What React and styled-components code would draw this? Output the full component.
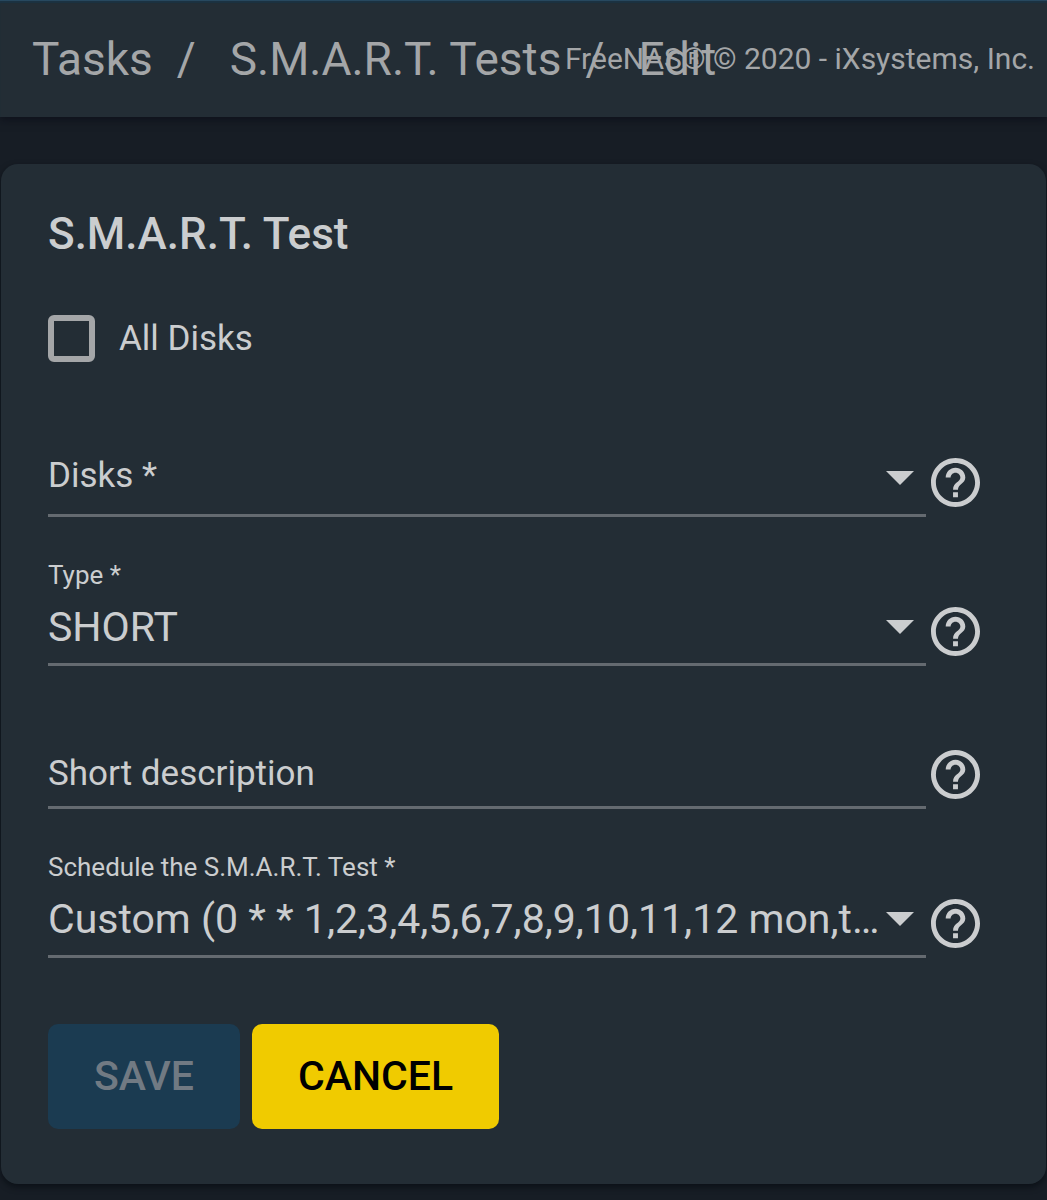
import React, { useState } from 'react'
import styled, { createGlobalStyle, css } from 'styled-components'
import { MdHelpOutline } from 'react-icons/md'


const colors = {
  page: '#171d25',
  panel: '#232d35',
  accentLine: '#27485f',
  text: '#cbcdcf',
  muted: '#a4a6a8',
  underline: '#646a70',
  save: '#1b3b51',
  saveText: '#717a83',
  cancel: '#f0cb00'
}

const GlobalStyle = createGlobalStyle`
  * {
    box-sizing: border-box;
  }

  body {
    margin: 0;
    background: ${colors.page};
    color: ${colors.text};
    font-family: Roboto, sans-serif;
  }
`

const TopBar = styled.header`
  display: grid;
  align-items: center;
  height: 117px;
  padding: 0 12px 0 32px;
  border-top: 1px solid ${colors.accentLine};
  background: ${colors.panel};
  box-shadow: inset 0 2px 1px #1b3242, 0 3px 8px rgba(8, 10, 22, 0.6);
  color: ${colors.muted};
  white-space: nowrap;
`

const Breadcrumb = styled.nav`
  grid-area: 1 / 1;
  font-size: 46px;
  line-height: 54px;
`

const CrumbLink = styled.a`
  color: inherit;
  text-decoration: none;
`

const Separator = styled.span`
  margin: 0 34px 0 24px;
`

const Copyright = styled.span`
  grid-area: 1 / 1;
  justify-self: end;
  font-size: 30px;
  line-height: 36px;
`

const Card = styled.main`
  margin: 47px 1px 16px;
  padding: 45px 47px 55px;
  border-radius: 17px;
  background: ${colors.panel};
  box-shadow: 0 3px 6px rgba(4, 8, 14, 0.6);
`

const Title = styled.h1`
  margin: 0 0 56px;
  font-size: 44px;
  font-weight: 500;
  line-height: 50px;
`

const CheckRow = styled.label`
  display: flex;
  align-items: center;
  gap: 24px;
  margin-bottom: 49px;
  font-size: 35px;
  line-height: 44px;
`

const Checkbox = styled.input`
  appearance: none;
  width: 47px;
  height: 47px;
  margin: 0;
  border: 6px solid ${colors.muted};
  border-radius: 6px;

  &:checked {
    background: ${colors.muted};
  }
`

const Fields = styled.div`
  display: flex;
  flex-direction: column;
  gap: 43px;
`

const FieldRow = styled.div`
  display: flex;
  align-items: flex-end;
  gap: 5px;
  padding-right: 19px;
`

const FieldBox = styled.div`
  display: grid;
  flex: 1;
  grid-template-columns: minmax(0, 1fr);
  grid-template-rows: 30px 48px;
  row-gap: 13px;
  padding-bottom: ${({ $compact }) => $compact ? 6 : 12}px;
  border-bottom: 3px solid ${colors.underline};
`

const FieldLabel = styled.label`
  grid-column: 1;
  grid-row: ${({ $floating }) => $floating ? 1 : 2};
  align-self: start;
  font-size: ${({ $floating }) => $floating ? 26 : 35}px;
  line-height: ${({ $floating }) => $floating ? 30 : 44}px;
  pointer-events: none;
`

const control = css`
  grid-column: 1;
  grid-row: 2;
  width: 100%;
  height: 48px;
  margin: 0;
  padding: 0;
  border: 0;
  outline: 0;
  background: transparent;
  color: inherit;
  font: 41px/48px Roboto, sans-serif;
`

const TextInput = styled.input`
  ${control}
`

const Select = styled.select`
  ${control}
  appearance: none;
  padding-right: 44px;
  overflow: hidden;
  text-overflow: ellipsis;
  white-space: nowrap;

  option {
    background: ${colors.panel};
  }
`

const Arrow = styled.svg`
  grid-column: 1;
  grid-row: 2;
  align-self: center;
  justify-self: end;
  width: 28px;
  height: 14px;
  margin-right: 12px;
  fill: ${colors.text};
  pointer-events: none;
`

const HelpButton = styled.button`
  display: flex;
  margin: 0 0 10px;
  padding: 0;
  border: 0;
  background: none;
  color: inherit;
`

const Actions = styled.div`
  display: flex;
  gap: 12px;
  margin-top: 66px;
`

const Button = styled.button`
  padding: 28px 46px 29px;
  border: 0;
  border-radius: 10px;
  background: ${({ $primary }) => $primary ? colors.save : colors.cancel};
  color: ${({ $primary }) => $primary ? colors.saveText : '#000'};
  font: 500 41px/48px Roboto, sans-serif;
`

const Help = ({ topic }) =>
  <HelpButton type="button" aria-label={`Help: ${topic}`}>
    <MdHelpOutline size={49} viewBox="2 2 20 20" />
  </HelpButton>

const SelectField = ({ id, label, options, value, onChange }) =>
  <FieldRow>
    <FieldBox>
      <FieldLabel htmlFor={id} $floating={value !== ''}>{label} *</FieldLabel>
      <Select
        id={id}
        value={value}
        onChange={event => onChange(event.target.value)}
        required
      >
        {options.map(option => <option key={option} value={option}>{option}</option>)}
      </Select>
      <Arrow viewBox="0 0 28 14" aria-hidden="true">
        <path d="M0 0h28L14 14z" />
      </Arrow>
    </FieldBox>
    <Help topic={label} />
  </FieldRow>

const InputField = ({ id, label, value, onChange }) =>
  <FieldRow>
    <FieldBox $compact>
      <FieldLabel htmlFor={id} $floating={value !== ''}>{label}</FieldLabel>
      <TextInput
        id={id}
        value={value}
        onChange={event => onChange(event.target.value)}
      />
    </FieldBox>
    <Help topic={label} />
  </FieldRow>

const diskOptions = ['', 'ada0', 'ada1']
const typeOptions = ['SHORT', 'LONG', 'CONVEYANCE', 'OFFLINE']
const scheduleOptions = [
  'Custom (0 * * 1,2,3,4,5,6,7,8,9,10,11,12 mon,tue,wed,thu,fri,sat,sun)',
  'Hourly',
  'Daily',
  'Weekly',
  'Monthly'
]

const App = () => {
  const [allDisks, setAllDisks] = useState(false)
  const [disks, setDisks] = useState('')
  const [type, setType] = useState(typeOptions[0])
  const [description, setDescription] = useState('')
  const [schedule, setSchedule] = useState(scheduleOptions[0])

  return (
    <>
      <GlobalStyle />
      <TopBar>
        <Breadcrumb>
          <CrumbLink href="#tasks">Tasks</CrumbLink>
          <Separator>/</Separator>
          <CrumbLink href="#smart">S.M.A.R.T. Tests</CrumbLink>
          <Separator>/</Separator>
          <CrumbLink href="#edit">Edit</CrumbLink>
        </Breadcrumb>
        <Copyright>FreeNAS® © 2020 - iXsystems, Inc.</Copyright>
      </TopBar>
      <Card>
        <form onSubmit={event => event.preventDefault()}>
          <Title>S.M.A.R.T. Test</Title>
          <CheckRow>
            <Checkbox
              type="checkbox"
              checked={allDisks}
              onChange={event => setAllDisks(event.target.checked)}
            />
            All Disks
          </CheckRow>
          <Fields>
            <SelectField
              id="disks"
              label="Disks"
              options={diskOptions}
              value={disks}
              onChange={setDisks}
            />
            <SelectField
              id="type"
              label="Type"
              options={typeOptions}
              value={type}
              onChange={setType}
            />
            <InputField
              id="description"
              label="Short description"
              value={description}
              onChange={setDescription}
            />
            <SelectField
              id="schedule"
              label="Schedule the S.M.A.R.T. Test"
              options={scheduleOptions}
              value={schedule}
              onChange={setSchedule}
            />
          </Fields>
          <Actions>
            <Button type="submit" $primary disabled={disks === ''}>SAVE</Button>
            <Button type="button">CANCEL</Button>
          </Actions>
        </form>
      </Card>
    </>
  )
}

export default App
